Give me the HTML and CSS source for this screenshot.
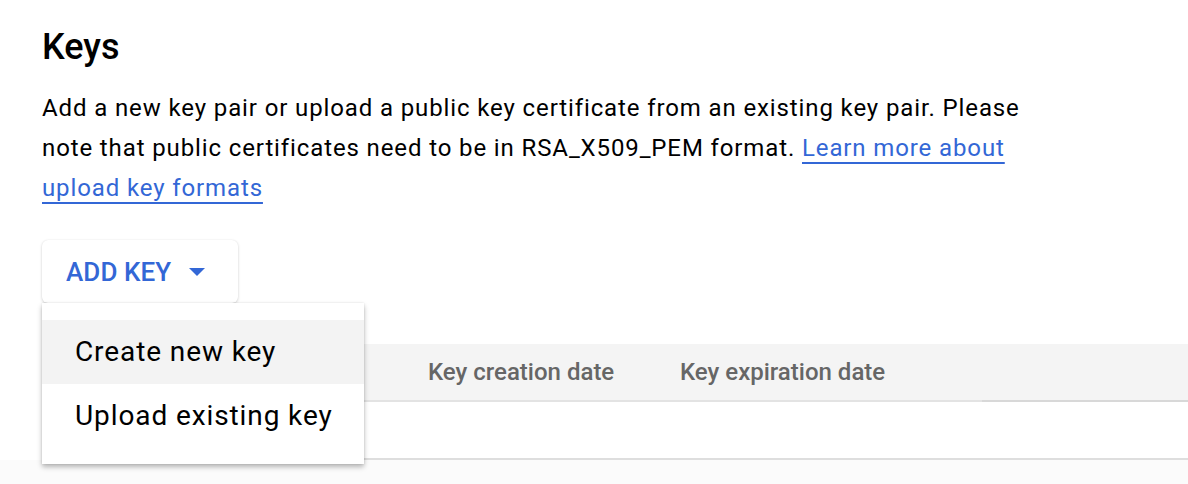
FILE: index.html
```html
<!DOCTYPE html>
<html lang="en">
<head>
<meta charset="utf-8">
<title>Keys</title>
<link rel="stylesheet" href="styles.css">
</head>
<body>
<main class="page">
  <h1 class="title">Keys</h1>
  <p class="desc">Add a new key pair or upload a public key certificate from an existing key pair. Please note that public certificates need to be in RSA_X509_PEM format. <a class="link" href="#">Learn more about upload key formats</a></p>
  <div class="actions">
    <button class="add-key" type="button"><span>ADD KEY</span><span class="caret"></span></button>
    <ul class="menu">
      <li class="menu-item is-hover">Create new key</li>
      <li class="menu-item">Upload existing key</li>
    </ul>
  </div>
  <div class="table">
    <div class="thead">
      <div class="th"></div>
      <div class="th">Key creation date</div>
      <div class="th">Key expiration date</div>
      <div class="th th-last"></div>
    </div>
    <div class="trow"></div>
  </div>
</main>
<div class="footer-fill"></div>
</body>
</html>
```

FILE: styles.css
```css
html, body {
  margin: 0;
  padding: 0;
  background: #ffffff;
}
body {
  font-family: Roboto, "Liberation Sans", Arial, sans-serif;
  color: #000000;
  overflow: hidden;
}
.page {
  padding: 0 0 0 42px;
}
.title {
  margin: 0;
  padding-top: 23px;
  font-size: 36px;
  line-height: 48px;
  font-weight: 500;
}
.desc {
  margin: 17px 0 0 0;
  width: 1000px;
  font-size: 24px;
  line-height: 40px;
  font-weight: 400;
  letter-spacing: 0.88px;
}
.link {
  color: #3367d6;
  text-decoration: underline;
  text-decoration-thickness: 2px;
  text-underline-offset: 6px;
}
.actions {
  position: relative;
  margin-top: 32px;
}
.add-key {
  display: flex;
  align-items: center;
  height: 63px;
  width: 196px;
  padding: 0 0 0 24px;
  border: none;
  border-radius: 6px;
  background: #ffffff;
  box-shadow: 0 1px 3px rgba(0, 0, 0, 0.18), 0 0 1px rgba(0, 0, 0, 0.08);
  color: #3367d6;
  font-family: Roboto, "Liberation Sans", Arial, sans-serif;
  font-size: 26px;
  font-weight: 500;
  letter-spacing: 0.1px;
}
.caret {
  width: 0;
  height: 0;
  margin-left: 18px;
  border-left: 8px solid transparent;
  border-right: 8px solid transparent;
  border-top: 8px solid #3367d6;
}
.menu {
  position: absolute;
  z-index: 2;
  left: 0;
  top: 63px;
  width: 322px;
  margin: 0;
  padding: 17px 0 16px 0;
  list-style: none;
  background: #ffffff;
  box-shadow: 0 3px 5px rgba(0, 0, 0, 0.28), 0 0 2px rgba(0, 0, 0, 0.1);
}
.menu-item {
  height: 64px;
  line-height: 64px;
  padding-left: 33px;
  font-size: 28px;
  font-weight: 400;
  letter-spacing: 0.9px;
  color: #000000;
}
.menu-item.is-hover {
  background: #f3f3f3;
}
.table {
  margin-top: 41px;
}
.thead {
  display: grid;
  grid-template-columns: 386px 252px 302px 1fr;
  height: 58px;
  background: #f4f4f4;
}
.th {
  display: flex;
  align-items: center;
  border-bottom: 2px solid #e3e3e3;
  font-size: 24px;
  font-weight: 500;
  color: #666666;
}
.th-last {
  border-bottom-color: #d8d8d8;
}
.trow {
  height: 56px;
  border-bottom: 2px solid #dedede;
}
.footer-fill {
  height: 30px;
  background: #fbfbfb;
}
```
